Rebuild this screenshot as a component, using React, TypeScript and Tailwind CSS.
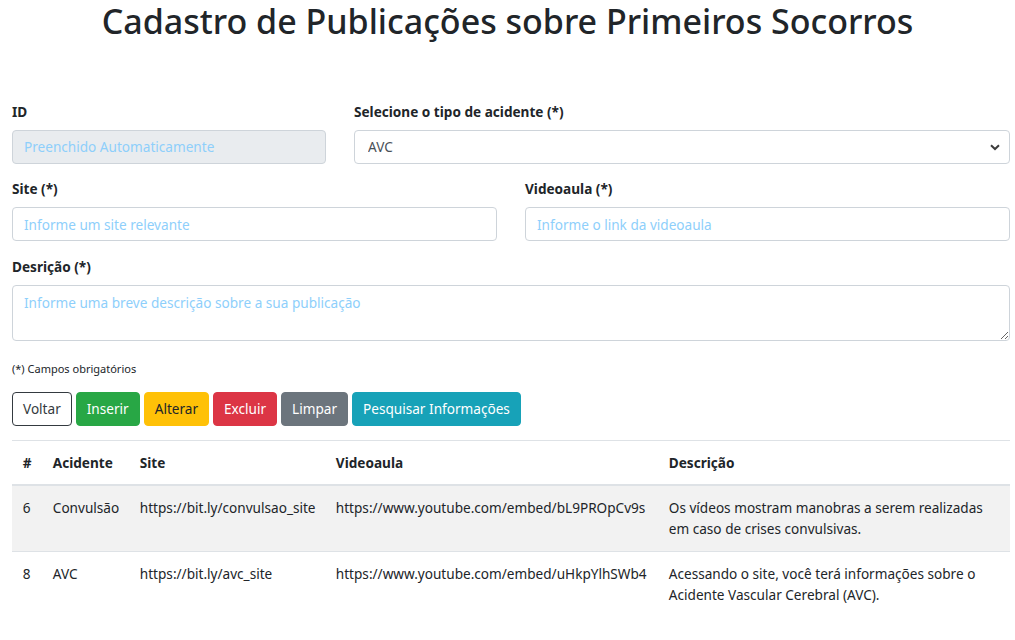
import React from "react";

const font = { fontFamily: '"Noto Sans", "Open Sans", sans-serif' };

const baseInput =
  "block w-full h-[34.2px] text-[13.6px] text-[#495057] border border-[#ced4da] rounded-[4px] outline-none placeholder:text-[#8ecffb]";

function Label({ children }: { children: React.ReactNode }) {
  return (
    <label className="block text-[13.6px] leading-[21.6px] font-bold text-[#212529] mb-[7.2px]">
      {children}
    </label>
  );
}

const rows = [
  {
    id: "6",
    ac: "Convulsão",
    site: "https://bit.ly/convulsao_site",
    video: "https://www.youtube.com/embed/bL9PROpCv9s",
    desc: ["Os vídeos mostram manobras a serem realizadas", "em caso de crises convulsivas."],
  },
  {
    id: "8",
    ac: "AVC",
    site: "https://bit.ly/avc_site",
    video: "https://www.youtube.com/embed/uHkpYlhSWb4",
    desc: ["Acessando o site, você terá informações sobre o", "Acidente Vascular Cerebral (AVC)."],
  },
];

const btn = "h-[34px] px-[10px] rounded-[4px] border whitespace-nowrap";

export default function App() {
  return (
    <div className="w-[1015px] h-[640px] overflow-hidden bg-white text-[#212529]" style={font}>
      <div className="h-[101px]">
        <h1 className="text-center text-[34px] leading-[42px] font-medium text-[#212529]">
          Cadastro de Publicações sobre Primeiros Socorros
        </h1>
      </div>
      <div className="pl-[12px] pr-[5px]">
        <div className="grid grid-cols-[314px_1fr] gap-x-[28px] mb-[14.4px]">
          <div>
            <Label>ID</Label>
            <input
              disabled
              placeholder="Preenchido Automaticamente"
              className={baseInput + " px-[11px] bg-[#e9ecef]"}
            />
          </div>
          <div>
            <Label>Selecione o tipo de acidente (*)</Label>
            <div className="relative">
              <select className={baseInput + " pl-[13px] bg-white appearance-none"} defaultValue="AVC">
                <option>AVC</option>
                <option>Convulsão</option>
              </select>
              <svg
                className="absolute right-[10px] top-[14px] pointer-events-none"
                width="10"
                height="7"
                viewBox="0 0 10 7"
              >
                <path d="M1 1.2 L5 5 L9 1.2" stroke="#3c3c3c" strokeWidth="2" fill="none" />
              </svg>
            </div>
          </div>
        </div>
        <div className="grid grid-cols-2 gap-x-[28px] mb-[14.4px]">
          <div>
            <Label>Site (*)</Label>
            <input placeholder="Informe um site relevante" className={baseInput + " px-[11px] bg-white"} />
          </div>
          <div>
            <Label>Videoaula (*)</Label>
            <input placeholder="Informe o link da videoaula" className={baseInput + " px-[11px] bg-white"} />
          </div>
        </div>
        <div className="mb-[14.4px]">
          <Label>Desrição (*)</Label>
          <textarea
            placeholder="Informe uma breve descrição sobre a sua publicação"
            className="block w-full h-[56px] px-[11px] py-[6px] text-[13.6px] leading-[21.6px] text-[#495057] bg-white border border-[#ced4da] rounded-[4px] outline-none placeholder:text-[#8ecffb] resize-y"
          />
        </div>
        <div className="text-[11px] leading-[17px] text-[#212529] mb-[15px] pt-[5px]">
          (*) Campos obrigatórios
        </div>
        <div className="flex gap-[4px] text-[13.6px] mb-[14px]">
          <button className={btn + " border-[#343a40] text-[#343a40] bg-white"}>Voltar</button>
          <button className={btn + " border-[#28a745] text-white bg-[#28a745]"}>Inserir</button>
          <button className={btn + " border-[#ffc107] text-[#212529] bg-[#ffc107]"}>Alterar</button>
          <button className={btn + " border-[#dc3545] text-white bg-[#dc3545]"}>Excluir</button>
          <button className={btn + " border-[#6c757d] text-white bg-[#6c757d]"}>Limpar</button>
          <button className={btn + " border-[#17a2b8] text-white bg-[#17a2b8]"}>Pesquisar Informações</button>
        </div>
        <table className="w-full table-fixed border-collapse text-[13.6px] leading-[21.6px]">
          <colgroup>
            <col className="w-[30px]" />
            <col className="w-[87px]" />
            <col className="w-[196px]" />
            <col className="w-[333px]" />
            <col />
          </colgroup>
          <thead>
            <tr className="border-t border-[#dee2e6] border-b-2">
              <th className="text-left font-bold p-[10.8px] whitespace-nowrap">#</th>
              <th className="text-left font-bold p-[10.8px] whitespace-nowrap">Acidente</th>
              <th className="text-left font-bold p-[10.8px] whitespace-nowrap">Site</th>
              <th className="text-left font-bold p-[10.8px] whitespace-nowrap">Videoaula</th>
              <th className="text-left font-bold p-[10.8px] whitespace-nowrap">Descrição</th>
            </tr>
          </thead>
          <tbody>
            {rows.map((r, i) => (
              <tr
                key={r.id}
                className={"border-t border-[#dee2e6] align-top " + (i % 2 === 0 ? "bg-[#f2f2f2]" : "")}
              >
                <td className="p-[10.8px] whitespace-nowrap">{r.id}</td>
                <td className="p-[10.8px] whitespace-nowrap">{r.ac}</td>
                <td className="p-[10.8px] whitespace-nowrap">{r.site}</td>
                <td className="p-[10.8px] whitespace-nowrap">{r.video}</td>
                <td className="p-[10.8px] whitespace-nowrap">
                  {r.desc[0]}
                  <br />
                  {r.desc[1]}
                </td>
              </tr>
            ))}
          </tbody>
        </table>
      </div>
    </div>
  );
}
